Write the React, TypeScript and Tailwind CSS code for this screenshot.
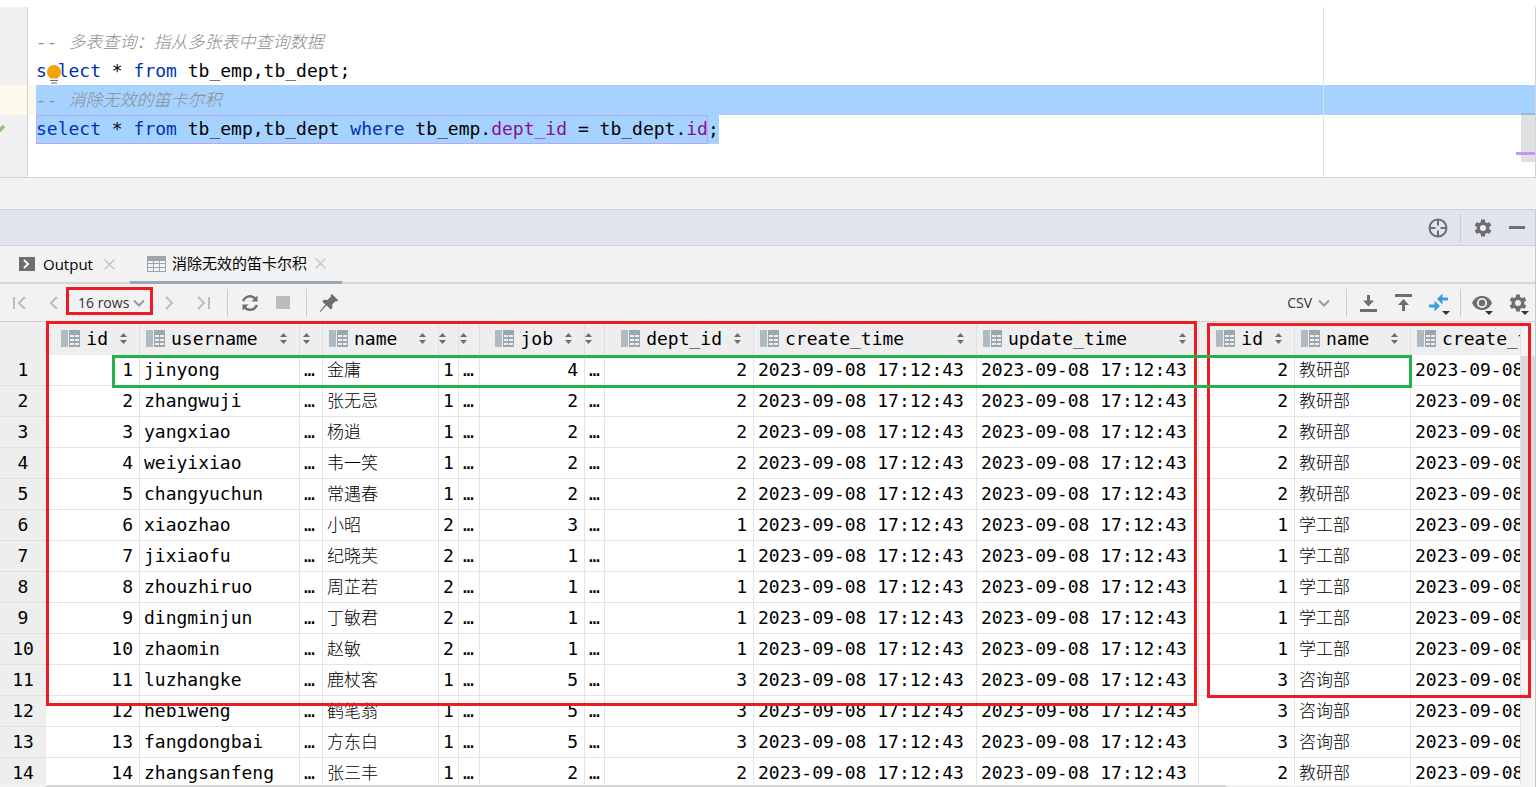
import React from "react";

const mono = "font-['DejaVu_Sans_Mono','Noto_Sans_CJK_SC',monospace]";

type Column = {
  key: string;
  label?: string;
  width?: string;
  numeric?: boolean;
};

const columns: Column[] = [
  { key: "id", label: "id", width: "w-[94px]", numeric: true },
  { key: "username", label: "username", width: "w-[160px]" },
  { key: "password", width: "w-[23px]" },
  { key: "name", label: "name", width: "w-[116px]" },
  { key: "gender", width: "w-[20px]" },
  { key: "image", width: "w-[21px]" },
  { key: "job", label: "job", width: "w-[105px]", numeric: true },
  { key: "entrydate", width: "w-[20px]" },
  { key: "dept_id", label: "dept_id", width: "w-[149px]", numeric: true },
  { key: "create_time", label: "create_time", width: "w-[223px]" },
  { key: "update_time", label: "update_time", width: "w-[222px]" },
  { key: "d_id", label: "id", width: "w-[96px]", numeric: true },
  { key: "d_name", label: "name", width: "w-[116px]" },
  { key: "d_create_time", label: "create_time" },
];

const people: [string, string, number, number, number][] = [
  ["jinyong", "金庸", 1, 4, 2],
  ["zhangwuji", "张无忌", 1, 2, 2],
  ["yangxiao", "杨逍", 1, 2, 2],
  ["weiyixiao", "韦一笑", 1, 2, 2],
  ["changyuchun", "常遇春", 1, 2, 2],
  ["xiaozhao", "小昭", 2, 3, 1],
  ["jixiaofu", "纪晓芙", 2, 1, 1],
  ["zhouzhiruo", "周芷若", 2, 1, 1],
  ["dingminjun", "丁敏君", 2, 1, 1],
  ["zhaomin", "赵敏", 2, 1, 1],
  ["luzhangke", "鹿杖客", 1, 5, 3],
  ["hebiweng", "鹤笔翁", 1, 5, 3],
  ["fangdongbai", "方东白", 1, 5, 3],
  ["zhangsanfeng", "张三丰", 1, 2, 2],
];

const deptNames: Record<number, string> = { 1: "学工部", 2: "教研部", 3: "咨询部" };
const time = "2023-09-08 17:12:43";

const rows = people.map(([username, name, gender, job, dept], i) => [
  i + 1, username, "…", name, gender, "…", job, "…", dept, time, time, dept, deptNames[dept], time,
]);

const ColumnIcon = () => (
  <svg width="19" height="17" viewBox="0 0 19 17" className="shrink-0" aria-hidden="true">
    <path fill="#b0bac1" d="M0 0h7v17H0z" />
    <path fill="#9aa7b0" d="M8 0h11v17H8z" />
    <path fill="#eee" d="M9 5h4v2H9zM14 5h4v2h-4zM9 9h4v2H9zM14 9h4v2h-4zM9 13h4v2H9zM14 13h4v2h-4z" />
  </svg>
);

const SortIcon = () => (
  <svg width="7" height="11" viewBox="0 0 7 11" fill="#6e6e6e" className="shrink-0" aria-hidden="true">
    <path d="M3.5 0L7 4H0zM3.5 11L0 7h7z" />
  </svg>
);

const Chevron = ({ d, color = "#bcbcbc" }: { d: string; color?: string }) => (
  <svg width="16" height="16" viewBox="0 0 16 16" fill="none" stroke={color} strokeWidth="2" aria-hidden="true">
    <path d={d} />
  </svg>
);

const CloseIcon = () => (
  <svg width="11" height="11" viewBox="0 0 11 11" stroke="#bfc3c6" strokeWidth="1.3" aria-hidden="true">
    <path d="M.5.5l10 10M10.5.5l-10 10" />
  </svg>
);

const GearIcon = () => (
  <svg width="20" height="20" viewBox="0 0 20 20" aria-hidden="true">
    <g fill="#6e6e6e">
      <circle cx="10" cy="10" r="6.4" />
      <path d="M8 1.5h4v17H8z" />
      <path d="M8 1.5h4v17H8z" transform="rotate(60 10 10)" />
      <path d="M8 1.5h4v17H8z" transform="rotate(120 10 10)" />
    </g>
    <circle cx="10" cy="10" r="3" fill="#eceef1" />
  </svg>
);

const DropMark = () => (
  <svg width="8" height="4" viewBox="0 0 8 4" className="absolute right-0 bottom-0" aria-hidden="true">
    <path fill="#333" d="M0 0h8L4 4z" />
  </svg>
);

const IconButton = ({
  label,
  className = "",
  children,
}: {
  label: string;
  className?: string;
  children: React.ReactNode;
}) => (
  <button type="button" aria-label={label} className={`flex shrink-0 items-center justify-center ${className}`}>
    {children}
  </button>
);

const Separator = () => <span className="h-7 w-px shrink-0 bg-[#cdcdcd]" />;

const Kw = ({ children }: { children: React.ReactNode }) => <span className="text-[#0033b3]">{children}</span>;

const Comment = ({ children }: { children: React.ReactNode }) => (
  <span className="text-[#8c8c8c] italic">
    -- <span className="text-[17px] font-light">{children}</span>
  </span>
);

const CodeLine = ({
  height = "h-[29px]",
  caret = false,
  gutter,
  children,
}: {
  height?: string;
  caret?: boolean;
  gutter?: React.ReactNode;
  children?: React.ReactNode;
}) => (
  <div className={`flex ${height} ${caret ? "bg-[#fcfaed]" : ""}`}>
    <div
      className={`mr-2 flex w-7 shrink-0 items-center border-r border-[#d0d0d0] ${caret ? "" : "bg-[#f0f0f0]"}`}
    >
      {gutter}
    </div>
    <div className={`relative flex flex-1 items-center whitespace-pre ${caret ? "bg-[#a6d2ff]" : ""}`}>
      {children}
    </div>
  </div>
);

const Editor = () => (
  <section
    aria-label="SQL editor"
    className={`relative mt-[7px] border-r border-b border-[#d4d4d4] text-lg leading-7 ${mono}`}
  >
    <CodeLine height="h-5" />
    <CodeLine>
      <Comment>多表查询：指从多张表中查询数据</Comment>
    </CodeLine>
    <CodeLine>
      <code className={mono}>
        <Kw>select</Kw> * <Kw>from</Kw> tb_emp,tb_dept;
      </code>
      <svg width="14" height="19" viewBox="0 0 14 19" className="absolute top-[9px] left-[11px]" aria-hidden="true">
        <path fill="#f0a30a" d="M7 0a7 7 0 0 1 7 7c0 3-2 4.500-3.500 6.500h-7C2 11.500 0 10 0 7a7 7 0 0 1 7-7z" />
        <path fill="#6e6e6e" d="M3 15h8v1H3zM4 17.500h6v1H4z" />
      </svg>
    </CodeLine>
    <CodeLine height="h-[30px]" caret>
      <Comment>消除无效的笛卡尔积</Comment>
    </CodeLine>
    <CodeLine
      gutter={
        <svg width="6" height="14" viewBox="0 0 6 14" aria-hidden="true">
          <path d="M-2 7l1 1 5-5" stroke="#8ac37c" strokeWidth="3.5" fill="none" />
        </svg>
      }
    >
      <code className={`flex h-full items-center bg-[#a6d2ff] ${mono}`}>
        <span className="h-full outline-1 -outline-offset-1 outline-[#b9a6f5]">
          <Kw>select</Kw> * <Kw>from</Kw> tb_emp,tb_dept <Kw>where</Kw> tb_emp.
          <span className="text-[#871094]">dept_id</span> = tb_dept.
          <span className="text-[#871094]">id</span>
        </span>
        ;
      </code>
    </CodeLine>
    <CodeLine height="h-[33px]" />

    <div className="absolute inset-y-0 right-[211px] w-px bg-[#dedede]" />
    <div className="absolute top-[106px] right-0 h-[49px] w-[14px] bg-black/12" />
    <div className="absolute top-[145px] right-0 h-[3px] w-[19px] bg-[#c795f0]" />
  </section>
);

const ToolHeader = () => (
  <header className="flex h-[37px] shrink-0 items-center justify-end gap-3 border-y border-[#d1d1d1] bg-[#e1e4ec] pr-2">
    <IconButton label="Locate" className="h-5 w-5">
      <svg width="20" height="20" viewBox="0 0 20 20" fill="none" stroke="#6e6e6e" strokeWidth="2" aria-hidden="true">
        <circle cx="10" cy="10" r="8.500" />
        <path d="M10 1v6.500M10 12.500V19M1 10h6.500M12.500 10H19" />
      </svg>
    </IconButton>
    <Separator />
    <IconButton label="Settings" className="h-5 w-5">
      <GearIcon />
    </IconButton>
    <IconButton label="Hide" className="ml-0.5 h-5 w-5">
      <span className="h-[3px] w-4 bg-[#6e6e6e]" />
    </IconButton>
  </header>
);

const Tabs = () => (
  <div role="tablist" className="flex h-[38px] shrink-0 border-b-2 border-[#d8d8d8] text-[15px]">
    <div className="flex items-center pl-[19px]">
      <button type="button" role="tab" aria-selected="false" className="flex items-center gap-2">
        <svg width="16" height="14" viewBox="0 0 16 14" aria-hidden="true">
          <path fill="#6e6e6e" d="M0 0h16v14H0z" />
          <path d="M5 3l4 4-4 4" fill="none" stroke="#fff" strokeWidth="2" />
        </svg>
        Output
      </button>
      <IconButton label="Close Output" className="pl-[11px]">
        <CloseIcon />
      </IconButton>
    </div>
    <div className="-mb-0.5 ml-[15px] flex items-center border-b-[3px] border-[#9aa7b8] pr-4 pl-[17px]">
      <button type="button" role="tab" aria-selected="true" className="flex items-center gap-1.5">
        <svg width="19" height="16" viewBox="0 0 19 16" aria-hidden="true">
          <path fill="#9aa7b0" d="M0 0h19v16H0z" />
          <path
            fill="#f2f2f2"
            d="M1 5h5v2H1zM7 5h5v2H7zM13 5h5v2h-5zM1 8h5v3H1zM7 8h5v3H7zM13 8h5v3h-5zM1 12h5v3H1zM7 12h5v3H7zM13 12h5v3h-5z"
          />
        </svg>
        消除无效的笛卡尔积
      </button>
      <IconButton label="Close result" className="pl-2">
        <CloseIcon />
      </IconButton>
    </div>
  </div>
);

const Toolbar = () => (
  <div className="flex h-[38px] shrink-0 items-center justify-between border-b border-[#d1d1d1] pr-1.5 pl-3 text-sm text-[#333]">
    <div className="flex items-center">
      <IconButton label="First page">
        <Chevron d="M2 2v12M13 2L7 8l6 6" />
      </IconButton>
      <IconButton label="Previous page" className="ml-[18px]">
        <Chevron d="M11 2L5 8l6 6" />
      </IconButton>
      <div className="relative ml-4 flex items-center">
        <button type="button" className="flex items-center gap-1">
          16 rows
          <svg width="12" height="8" viewBox="0 0 12 8" fill="none" stroke="#8f9ba3" strokeWidth="2" aria-hidden="true">
            <path d="M1 1.500l5 5 5-5" />
          </svg>
        </button>
        <span className="pointer-events-none absolute -top-1.5 -right-2 -bottom-0.5 -left-3 border-3 border-[#ed1c24]" />
      </div>
      <IconButton label="Next page" className="ml-4">
        <Chevron d="M5 2l6 6-6 6" />
      </IconButton>
      <IconButton label="Last page" className="mr-4 ml-[18px]">
        <Chevron d="M3 2l6 6-6 6M14 2v12" />
      </IconButton>
      <Separator />
      <IconButton label="Reload" className="mr-4 ml-3">
        <svg width="20" height="18" viewBox="0 0 20 18" fill="none" stroke="#6e6e6e" strokeWidth="2.4" aria-hidden="true">
          <path d="M3.200 7.200A7 7 0 0 1 15.500 5M16.800 10.800A7 7 0 0 1 4.500 13" />
          <path d="M17.500 1.500v6h-6zM2.500 16.500v-6h6z" fill="#6e6e6e" stroke="none" />
        </svg>
      </IconButton>
      <IconButton label="Stop" className="mr-4">
        <span className="h-[13px] w-[14px] bg-[#bcbcbc]" />
      </IconButton>
      <Separator />
      <IconButton label="Pin tab" className="ml-3">
        <svg width="20" height="20" viewBox="0 0 20 20" fill="#6e6e6e" aria-hidden="true">
          <path d="M13 1l6.500 6.500-2 1-1-.3-3.300 3.300.2 3.500-1.700 1.500-4.200-4.200L1.500 19l-.7-.7 5.500-6.800-3-3L5 6.700l3.500.3L12 3.500 11.800 2z" />
        </svg>
      </IconButton>
    </div>

    <div className="flex items-center">
      <button type="button" className="mr-4 flex items-center gap-1.5">
        CSV
        <svg width="12" height="8" viewBox="0 0 12 8" fill="none" stroke="#8f9ba3" strokeWidth="2" aria-hidden="true">
          <path d="M1 1.500l5 5 5-5" />
        </svg>
      </button>
      <Separator />
      <IconButton label="Export data" className="ml-[13px]">
        <svg width="17" height="18" viewBox="0 0 17 18" fill="#6e6e6e" aria-hidden="true">
          <path d="M0 15h17v3H0zM7 1h3v5.500h4L8.500 12.500 3 6.500h4z" />
        </svg>
      </IconButton>
      <IconButton label="Import data" className="ml-[18px]">
        <svg width="17" height="18" viewBox="0 0 17 18" fill="#6e6e6e" aria-hidden="true">
          <path d="M0 0h17v3H0zM8.500 5L14 11h-4v6H7v-6H3z" />
        </svg>
      </IconButton>
      <IconButton label="Compare data" className="relative mr-2.5 ml-4 h-6 w-[22px]">
        <svg width="20" height="20" viewBox="0 0 20 20" fill="#389fd6" aria-hidden="true">
          <path d="M8 6l5.500-5.500v4H19v3h-5.500v4zM11 13l-5.500 5.500v-4H0v-3h5.500v-4z" />
        </svg>
        <DropMark />
      </IconButton>
      <Separator />
      <IconButton label="View options" className="relative ml-2.5 h-6 w-[22px]">
        <svg width="20" height="14" viewBox="0 0 20 14" aria-hidden="true">
          <path fill="#6e6e6e" d="M10 0c4.500 0 8 2.500 10 7-2 4.500-5.500 7-10 7S2 11.500 0 7c2-4.500 5.500-7 10-7z" />
          <circle cx="10" cy="7" r="4.200" fill="none" stroke="#f2f2f2" strokeWidth="1.800" />
        </svg>
        <DropMark />
      </IconButton>
      <IconButton label="Grid settings" className="relative ml-3.5 h-6 w-[22px]">
        <GearIcon />
        <DropMark />
      </IconButton>
    </div>
  </div>
);

const HeaderCell = ({ column }: { column: Column }) => (
  <th scope="col" className={`overflow-hidden border-r border-[#e0e0e0] p-0 font-normal ${column.width ?? ""}`}>
    <button
      type="button"
      aria-label={`Sort by ${column.key}`}
      className={`flex h-[33px] w-full items-center pr-3 whitespace-nowrap ${column.numeric || !column.label ? "justify-end" : "pl-1.5"}`}
    >
      {column.label && (
        <>
          <ColumnIcon />
          <span className={`ml-1.5 text-left ${column.numeric ? "mr-3" : "flex-1"}`}>{column.label}</span>
        </>
      )}
      <SortIcon />
    </button>
  </th>
);

const ResultGrid = () => (
  <div className="relative flex min-h-0 flex-1">
    <div className="flex min-w-0 flex-1 flex-col">
      <div className="min-h-0 flex-1 overflow-hidden">
        <table className={`w-full table-fixed border-separate border-spacing-0 bg-white text-lg leading-6 ${mono}`}>
          <thead className="bg-[#eee]">
            <tr>
              <th className="w-[46px] border-r border-[#e4e4e4] p-0" />
              {columns.map((column) => (
                <HeaderCell key={column.key} column={column} />
              ))}
            </tr>
          </thead>
          <tbody>
            {rows.map((row, i) => (
              <tr key={i}>
                <th scope="row" className="h-[31px] border-b border-[#e0e0e0] bg-[#eee] p-0 font-normal">
                  {i + 1}
                </th>
                {row.map((value, c) => (
                  <td
                    key={columns[c].key}
                    className={`h-[31px] overflow-hidden border-r border-b border-[#e4e4e4] py-0 pl-1 whitespace-nowrap ${
                      columns[c].numeric ? "pr-1.5 text-right" : ""
                    } ${columns[c].key.endsWith("name") && c > 1 ? "text-[17px] font-light" : ""}`}
                  >
                    {value}
                  </td>
                ))}
              </tr>
            ))}
          </tbody>
        </table>
      </div>
      <div className="ml-[46px] h-0.5 shrink-0 bg-[#f2f2f2]">
        <div className="h-full w-4/5 bg-[#d6d6d6]" />
      </div>
    </div>

    <div className="w-[14px] shrink-0 bg-[#f4f4f4] pt-[34px]">
      <div className="h-[284px] bg-[#d9d9d9]" />
    </div>

    {/* highlight frames: employee columns, department columns, first joined row */}
    <div className="pointer-events-none absolute top-[-1px] left-[46px] h-[385px] w-[1151px] border-3 border-[#ed1c24]" />
    <div className="pointer-events-none absolute top-px left-[1207px] h-[375px] w-[324px] border-3 border-[#ed1c24]" />
    <div className="pointer-events-none absolute top-[33px] left-[112px] h-[33px] w-[1300px] border-3 border-[#22b14c]" />
  </div>
);

const App = () => (
  <main className="flex h-screen flex-col overflow-hidden bg-white font-['Open_Sans','Noto_Sans_CJK_SC',sans-serif] text-black">
    <Editor />
    <div className="h-[31px] shrink-0 bg-[#f2f2f2]" />
    <div className="flex min-h-0 flex-1 flex-col border-r border-[#c8c8c8] bg-[#f2f2f2]">
      <ToolHeader />
      <Tabs />
      <Toolbar />
      <ResultGrid />
    </div>
  </main>
);

export default App;
